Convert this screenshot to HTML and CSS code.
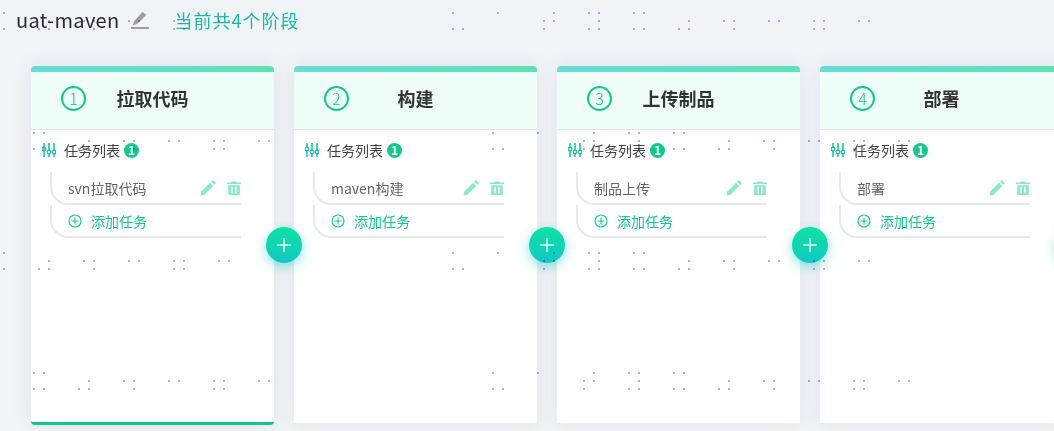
FILE: index.html
```html
<!DOCTYPE html>
<html lang="zh-CN">
<head>
  <meta charset="UTF-8" />
  <meta name="viewport" content="width=device-width, initial-scale=1.0"/>
  <title>uat-maven</title>
  <link rel="stylesheet" href="styles.css">
</head>
<body>
  <svg class="icon-defs" width="0" height="0">
    <symbol id="i-sliders" viewBox="0 0 14 14">
      <path d="M2 0v14M7 0v14M12 0v14" stroke="#3fd8ae" stroke-width="2" fill="none"/>
      <circle cx="2" cy="6" r="1.9" fill="#e8fbf5" stroke="#16b79a" stroke-width="1.1"/>
      <circle cx="7" cy="9" r="1.9" fill="#e8fbf5" stroke="#16b79a" stroke-width="1.1"/>
      <circle cx="12" cy="9" r="1.9" fill="#e8fbf5" stroke="#16b79a" stroke-width="1.1"/>
    </symbol>
    <symbol id="i-pencil" viewBox="0 0 16 16">
      <path d="M0.5 15.500l0.8-4L10 2.800l3.200 3.200-8.700 8.700zM11 1.800l1.200-1.200a1 1 0 0 1 1.400 0l1.800 1.800a1 1 0 0 1 0 1.400L14.200 5z" fill="#8ce8c8"/>
    </symbol>
    <symbol id="i-trash" viewBox="0 0 14 14">
      <path d="M4.500 1.500V0.400h5v1.100H14v1.600H0V1.500zM1.200 4.200h11.600V14H1.200zM4.400 6v6h1.500V6zM8.100 6v6h1.500V6z" fill="#8ce8c8" fill-rule="evenodd"/>
    </symbol>
    <symbol id="i-add" viewBox="0 0 14 14">
      <circle cx="7" cy="7" r="6" fill="none" stroke="#12c98c" stroke-width="1.1"/>
      <path d="M7 3.600v6.800M3.600 7h6.800" stroke="#12c98c" stroke-width="1.1"/>
    </symbol>
    <symbol id="i-plus" viewBox="0 0 16 16">
      <path d="M8 1v14M1 8h14" stroke="#e6fff7" stroke-width="1.500"/>
    </symbol>
  </svg>

  <div class="top-bar">
    <span class="pipeline-name">uat-maven</span>
    <svg class="name-edit" viewBox="0 0 18 18" width="18" height="18">
      <path d="M1.500 14.500l1.800-4.500L11.500 0.800l3.800 3.300L6 13z" fill="#a0a0a0"/>
      <rect x="0" y="16" width="18" height="2" fill="#a0a0a0"/>
    </svg>
    <span class="stage-count">当前共4个阶段</span>
  </div>

  <div class="board">
    <section class="stage active">
      <header class="stage-head">
        <span class="stage-no">1</span>
        <h2>拉取代码</h2>
      </header>
      <div class="task-title">
        <svg class="sliders"><use href="#i-sliders"/></svg>
        <span>任务列表</span>
        <span class="badge">1</span>
      </div>
      <div class="task-list">
        <div class="task-row">
          <span class="task-name">svn拉取代码</span>
          <svg class="pencil"><use href="#i-pencil"/></svg>
          <svg class="trash"><use href="#i-trash"/></svg>
        </div>
        <div class="task-add">
          <svg class="add"><use href="#i-add"/></svg>
          <span>添加任务</span>
        </div>
      </div>
      <button class="fab"><svg><use href="#i-plus"/></svg></button>
    </section>

    <section class="stage">
      <header class="stage-head">
        <span class="stage-no">2</span>
        <h2>构建</h2>
      </header>
      <div class="task-title">
        <svg class="sliders"><use href="#i-sliders"/></svg>
        <span>任务列表</span>
        <span class="badge">1</span>
      </div>
      <div class="task-list">
        <div class="task-row">
          <span class="task-name">maven构建</span>
          <svg class="pencil"><use href="#i-pencil"/></svg>
          <svg class="trash"><use href="#i-trash"/></svg>
        </div>
        <div class="task-add">
          <svg class="add"><use href="#i-add"/></svg>
          <span>添加任务</span>
        </div>
      </div>
      <button class="fab"><svg><use href="#i-plus"/></svg></button>
    </section>

    <section class="stage">
      <header class="stage-head">
        <span class="stage-no">3</span>
        <h2>上传制品</h2>
      </header>
      <div class="task-title">
        <svg class="sliders"><use href="#i-sliders"/></svg>
        <span>任务列表</span>
        <span class="badge">1</span>
      </div>
      <div class="task-list">
        <div class="task-row">
          <span class="task-name">制品上传</span>
          <svg class="pencil"><use href="#i-pencil"/></svg>
          <svg class="trash"><use href="#i-trash"/></svg>
        </div>
        <div class="task-add">
          <svg class="add"><use href="#i-add"/></svg>
          <span>添加任务</span>
        </div>
      </div>
      <button class="fab"><svg><use href="#i-plus"/></svg></button>
    </section>

    <section class="stage">
      <header class="stage-head">
        <span class="stage-no">4</span>
        <h2>部署</h2>
      </header>
      <div class="task-title">
        <svg class="sliders"><use href="#i-sliders"/></svg>
        <span>任务列表</span>
        <span class="badge">1</span>
      </div>
      <div class="task-list">
        <div class="task-row">
          <span class="task-name">部署</span>
          <svg class="pencil"><use href="#i-pencil"/></svg>
          <svg class="trash"><use href="#i-trash"/></svg>
        </div>
        <div class="task-add">
          <svg class="add"><use href="#i-add"/></svg>
          <span>添加任务</span>
        </div>
      </div>
      <button class="fab"><svg><use href="#i-plus"/></svg></button>
    </section>
  </div>

  <!-- dotted watermark that sits over the whole page -->
  <svg class="watermark" width="1054" height="431">
    <defs>
      <g id="dots" fill="#aaaaff">
        <rect x="452" y="12" width="2" height="2"/><rect x="497" y="12" width="2" height="2"/>
        <rect x="553" y="12" width="2" height="2"/><rect x="588" y="12" width="2" height="2"/>
        <rect x="598" y="12" width="2" height="2"/><rect x="633" y="12" width="2" height="2"/>
        <rect x="3" y="12" width="2" height="2"/>
        <rect x="543" y="20" width="2" height="2"/><rect x="553" y="20" width="2" height="2"/>
        <rect x="598" y="20" width="2" height="2"/><rect x="48" y="20" width="2" height="2"/>
        <rect x="83" y="20" width="2" height="2"/><rect x="93" y="20" width="2" height="2"/>
        <rect x="128" y="20" width="2" height="2"/><rect x="138" y="20" width="2" height="2"/>
        <rect x="173" y="20" width="2" height="2"/><rect x="183" y="20" width="2" height="2"/>
        <rect x="218" y="20" width="2" height="2"/><rect x="228" y="20" width="2" height="2"/>
        <rect x="452" y="28" width="2" height="2"/><rect x="462" y="28" width="2" height="2"/>
        <rect x="543" y="28" width="2" height="2"/><rect x="588" y="28" width="2" height="2"/>
        <rect x="598" y="28" width="2" height="2"/><rect x="633" y="28" width="2" height="2"/>
        <rect x="3" y="28" width="2" height="2"/><rect x="38" y="28" width="2" height="2"/>
        <rect x="48" y="28" width="2" height="2"/><rect x="93" y="28" width="2" height="2"/>
        <rect x="173" y="28" width="2" height="2"/><rect x="183" y="28" width="2" height="2"/>
      </g>
      <pattern id="dots-a" width="640" height="240" patternUnits="userSpaceOnUse">
        <use href="#dots"/>
      </pattern>
      <pattern id="dots-b" width="640" height="240" patternUnits="userSpaceOnUse" patternTransform="translate(40 120)">
        <use href="#dots"/>
      </pattern>
    </defs>
    <rect width="1054" height="431" fill="url(#dots-a)"/>
    <rect width="1054" height="431" fill="url(#dots-b)"/>
  </svg>
</body>
</html>
```

FILE: styles.css
```css
* {
  margin: 0;
  padding: 0;
  box-sizing: border-box;
}

html, body {
  height: 431px;
  overflow: hidden;
}

body {
  position: relative;
  font-family: "Noto Sans CJK SC", "Noto Sans", sans-serif;
  background: #f1f4f6;
  color: #333;
}

.icon-defs {
  position: absolute;
}

.top-bar {
  display: flex;
  align-items: center;
  height: 40px;
  padding: 0 0 0 16px;
}

.pipeline-name {
  font-size: 20px;
  line-height: 40px;
  letter-spacing: 0.35px;
  color: #2b2b3a;
}

.name-edit {
  margin-left: 11px;
}

.stage-count {
  margin-left: 26px;
  font-size: 18px;
  letter-spacing: 1px;
  color: #1cb8a4;
}

.board {
  display: flex;
  align-items: flex-start;
  gap: 20px;
  padding: 26px 0 0 31px;
}

.stage {
  position: relative;
  flex: 0 0 243px;
  height: 357px;
  background: #fff;
  border-radius: 4px 4px 0 0;
  box-shadow: 0 0 20px rgba(90, 120, 190, 0.11);
}

.stage.active {
  height: 359px;
  border-bottom: 3px solid #12c98c;
  border-radius: 4px;
}

.stage-head {
  display: grid;
  grid-template-columns: 1fr auto 1fr;
  align-items: center;
  height: 64px;
  padding-top: 1px;
  background: linear-gradient(#eefdf8, #eefdf8) no-repeat 0 6px,
    linear-gradient(90deg, #6bdbd8, #61e0b6);
  border-bottom: 1px solid #e2eae8;
  border-radius: 4px 4px 0 0;
}

.stage-no {
  display: flex;
  align-items: center;
  justify-content: center;
  width: 25px;
  height: 25px;
  margin-left: 30px;
  border: 2px solid #12c98c;
  border-radius: 50%;
  font-size: 16px;
  font-weight: 300;
  line-height: 1;
  color: #12c98c;
}

.stage-head h2 {
  font-size: 18px;
  font-weight: 700;
  color: #333;
}

.task-title {
  display: flex;
  align-items: center;
  height: 40px;
  padding: 0 0 0 11px;
  font-size: 14px;
  color: #444;
}

.sliders {
  width: 14px;
  height: 14px;
  margin-right: 8px;
}

.badge {
  display: flex;
  align-items: center;
  justify-content: center;
  width: 15px;
  height: 15px;
  margin-left: 4px;
  background: #12c98c;
  border-radius: 50%;
  font-size: 12px;
  font-weight: 700;
  line-height: 1;
  color: #fff;
}

.task-list {
  width: 191px;
  margin: 2px 0 0 19px;
}

.task-row,
.task-add {
  display: flex;
  align-items: center;
  height: 33px;
  border-left: 2px solid #e9e9e9;
  border-bottom: 2px solid #e9e9e9;
  border-bottom-left-radius: 18px;
  padding-left: 16px;
  font-size: 14px;
}

.task-row {
  color: #666;
}

.task-add {
  color: #12c98c;
}

.task-name {
  flex: 1;
}

.pencil {
  width: 16px;
  height: 16px;
  margin-right: 11px;
}

.trash {
  width: 14px;
  height: 14px;
}

.add {
  width: 14px;
  height: 14px;
  margin-right: 9px;
}

.fab {
  position: absolute;
  top: 161px;
  right: -28px;
  z-index: 2;
  display: flex;
  align-items: center;
  justify-content: center;
  width: 36px;
  height: 36px;
  border: none;
  border-radius: 50%;
  background: linear-gradient(#10e2a0, #10c8c4);
  box-shadow: 0 4px 12px rgba(16, 200, 180, 0.45);
}

.fab svg {
  width: 16px;
  height: 16px;
}

.watermark {
  position: absolute;
  top: 0;
  left: 0;
  z-index: 5;
  pointer-events: none;
  mix-blend-mode: multiply;
}
```
